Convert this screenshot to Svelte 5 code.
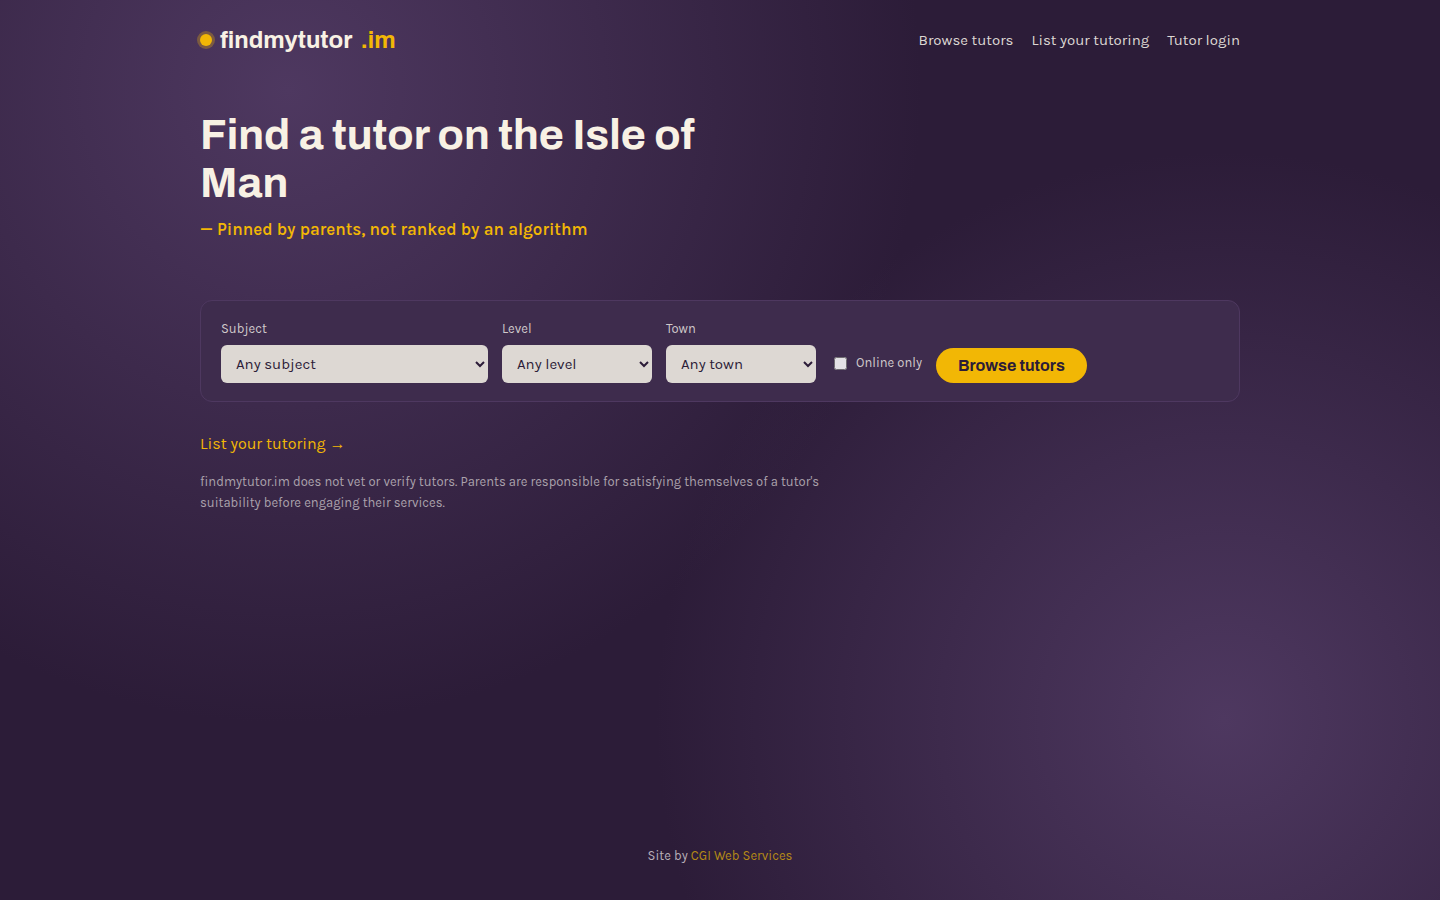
<script>
	let subject = $state('');
	let level = $state('');
	let town = $state('');
	let online = $state(false);

	const links = ['Browse tutors', 'List your tutoring', 'Tutor login'];
	const subjects = ['Maths', 'English', 'Science', 'Music'];
	const levels = ['Primary', 'GCSE', 'A-level'];
	const towns = ['Douglas', 'Ramsey', 'Peel', 'Castletown'];
</script>

<div class="page">
	<header class="wrap">
		<a class="brand" href="/"><span class="dot"></span><span>findmytutor</span><span class="tld">.im</span></a>
		<nav>
			{#each links as link}
				<a href="/">{link}</a>
			{/each}
		</nav>
	</header>

	<main class="wrap">
		<h1>Find a tutor on the Isle of Man</h1>
		<p class="tagline">— Pinned by parents, not ranked by an algorithm</p>

		<form class="search" onsubmit={(e) => e.preventDefault()}>
			<div class="field wide">
				<label for="subject">Subject</label>
				<select id="subject" bind:value={subject}>
					<option value="">Any subject</option>
					{#each subjects as s}<option>{s}</option>{/each}
				</select>
			</div>
			<div class="field">
				<label for="level">Level</label>
				<select id="level" bind:value={level}>
					<option value="">Any level</option>
					{#each levels as l}<option>{l}</option>{/each}
				</select>
			</div>
			<div class="field">
				<label for="town">Town</label>
				<select id="town" bind:value={town}>
					<option value="">Any town</option>
					{#each towns as t}<option>{t}</option>{/each}
				</select>
			</div>
			<label class="online">
				<input type="checkbox" bind:checked={online}>
				<span>Online only</span>
			</label>
			<button type="submit">Browse tutors</button>
		</form>

		<a class="list" href="/">List your tutoring →</a>
		<p class="note">findmytutor.im does not vet or verify tutors. Parents are responsible for satisfying themselves of a tutor's suitability before engaging their services.</p>
	</main>

	<footer>Site by <a href="/">CGI Web Services</a></footer>
</div>

<style>
	:global(body) {
		margin: 0;
		background: #2c1c38;
	}
	.page {
		display: flex;
		flex-direction: column;
		min-height: 100vh;
		box-sizing: border-box;
		font-family: Karla, Roboto, "Liberation Sans", sans-serif;
		font-size: 16px;
		line-height: 24px;
		color: #f8f1e4;
		background:
			radial-gradient(circle at 20% 10%, #4e3860 0%, transparent 45%),
			radial-gradient(circle at 85% 80%, #4e3860 0%, transparent 40%),
			#2c1c38;
	}
	a {
		color: #f2b705;
		text-decoration: none;
	}
	.wrap {
		width: 100%;
		max-width: 1080px;
		margin: 0 auto;
		padding: 0 20px;
		box-sizing: border-box;
	}
	header {
		display: flex;
		align-items: center;
		justify-content: space-between;
		height: 80px;
	}
	.brand {
		display: flex;
		align-items: center;
		gap: 8px;
		font: bold 24px/32px Archivo, "Liberation Sans", sans-serif;
		color: #f8f1e4;
	}
	.dot {
		width: 12px;
		height: 12px;
		border-radius: 50%;
		background: #f2b705;
		box-shadow: 0 0 0 3px rgba(242, 183, 5, 0.3);
	}
	.tld {
		color: #f2b705;
	}
	nav {
		display: flex;
		gap: 18px;
	}
	nav a {
		font-size: 15px;
		color: #ddd7d3;
	}
	main {
		flex: 1;
	}
	h1 {
		max-width: 560px;
		margin: 31px 0 0;
		font: bold 43px/48px Archivo, "Liberation Sans", sans-serif;
	}
	.tagline {
		margin: 10px 0 0;
		font-size: 17px;
		font-weight: 600;
		color: #f2b705;
	}
	.search {
		display: flex;
		flex-wrap: wrap;
		align-items: flex-end;
		gap: 14px;
		margin-top: 59px;
		padding: 18px 20px;
		border: 1px solid #4e3860;
		border-radius: 12px;
		background: #3e2c4d;
	}
	.field {
		display: flex;
		flex-direction: column;
		gap: 6px;
		width: 150px;
	}
	.wide {
		width: 267px;
	}
	label {
		font-size: 13px;
		line-height: 20px;
		color: #d0c9cb;
	}
	select {
		height: 38px;
		padding: 0 0 0 11px;
		border: 0;
		border-radius: 6px;
		background: #ddd8d3;
		color: #2c1c38;
		font: inherit;
		font-size: 15px;
	}
	.online {
		display: flex;
		align-items: center;
		gap: 9px;
		padding: 0 0 10px 4px;
	}
	.online input {
		width: 13px;
		height: 13px;
		margin: 0;
		opacity: 0.86;
	}
	button {
		height: 35px;
		padding: 0 22px;
		border: 0;
		border-radius: 18px;
		background: #f2b705;
		color: #2c1c38;
		font: bold 16px/20px Archivo, "Liberation Sans", sans-serif;
		cursor: pointer;
	}
	.list {
		display: inline-block;
		margin-top: 30px;
	}
	.note {
		max-width: 640px;
		margin: 15px 0 0;
		font-size: 13px;
		line-height: 21px;
		color: #aba2ac;
	}
	footer {
		padding: 0 20px 34px;
		text-align: center;
		font-size: 13px;
		line-height: 20px;
		color: #b9b0b8;
	}
	footer a {
		color: #b58a16;
	}
</style>
